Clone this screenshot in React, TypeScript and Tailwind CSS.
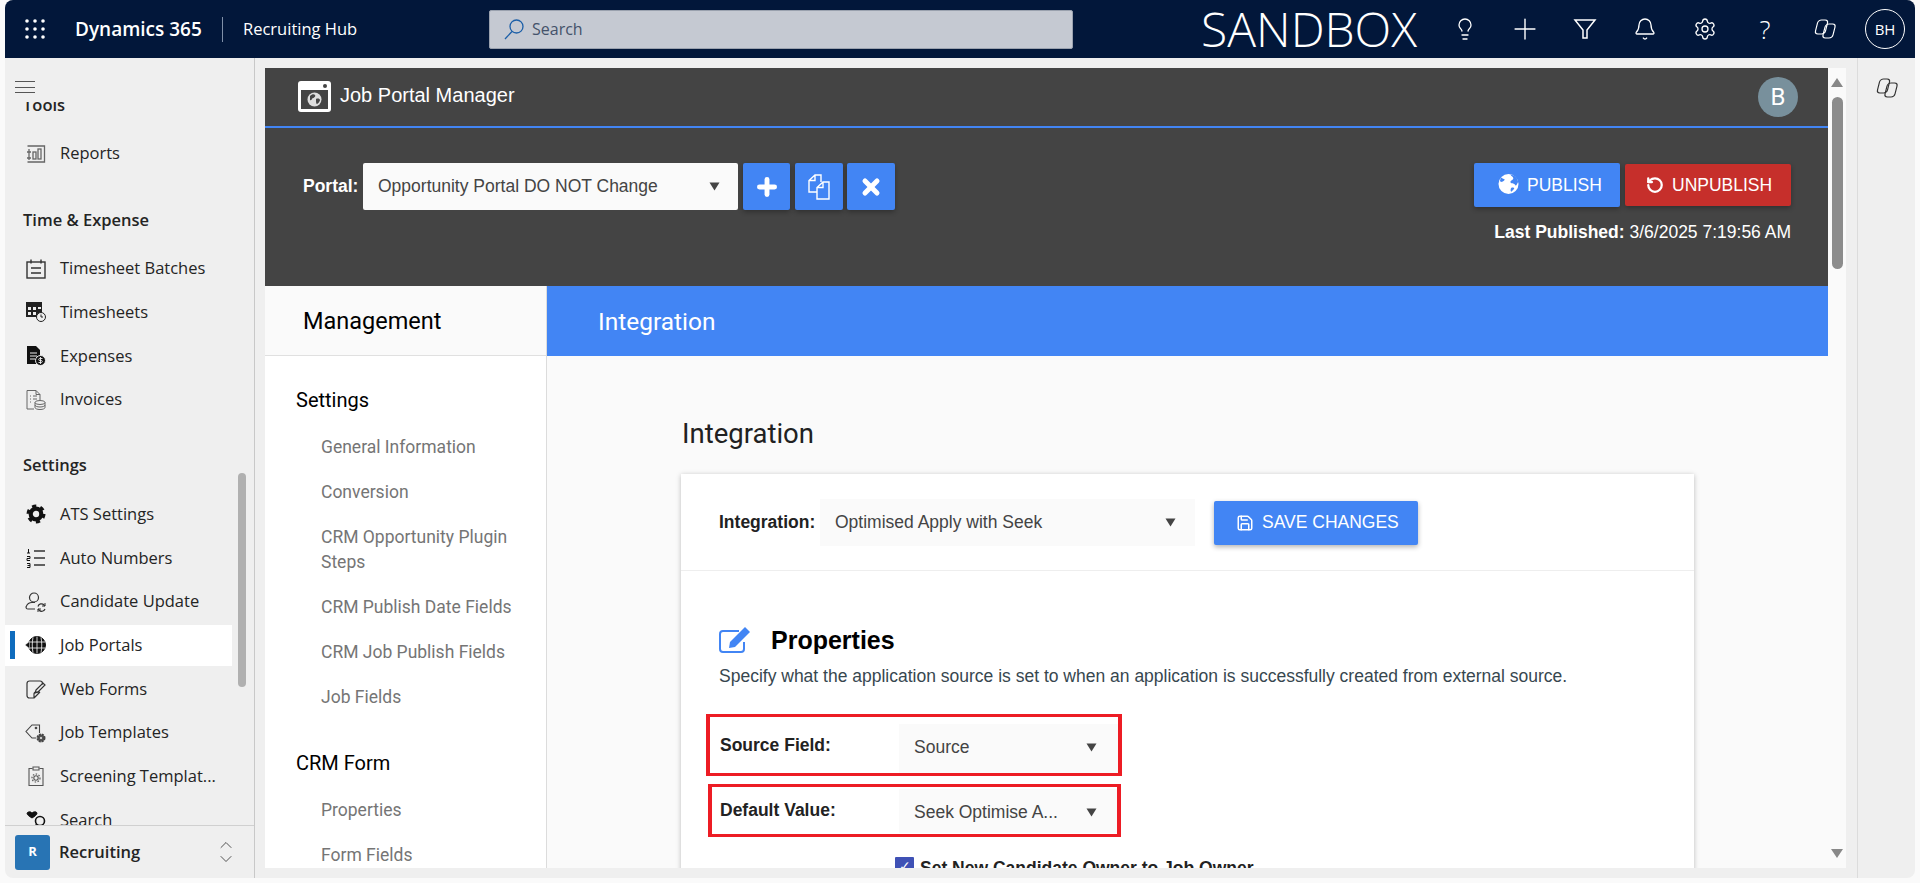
import React from 'react';
import { Lightbulb, Plus, Bell, Settings, ChevronUp, ChevronDown, RotateCcw, Save, X } from 'lucide-react';

const Caret = () => (
    <svg width="11" height="9" viewBox="0 0 11 9" className="shrink-0"><path d="M0.5 0.5h10L5.5 8.5z" fill="#444" /></svg>
);

const Copilot = ({ className = '' }: { className?: string }) => (
    <svg viewBox="0 0 24 24" fill="none" stroke="currentColor" strokeWidth="1.2" className={className}>
        <rect x="4.5" y="3" width="10" height="14" rx="3.2" transform="skewX(-14) translate(1.5 0)" />
        <rect x="13" y="7" width="10" height="14" rx="3.2" transform="skewX(-14) translate(1.5 0)" />
    </svg>
);

const Waffle = () => (
    <svg width="20" height="20" viewBox="0 0 20 20" fill="#fff">
        {[2, 10, 18].flatMap((y) => [2, 10, 18].map((x) => <circle key={`${x}-${y}`} cx={x} cy={y} r="1.8" />))}
    </svg>
);

const NavIcon = ({ name }: { name: string }) => {
    const s = { fill: 'none', stroke: '#333', strokeWidth: 1.1 };
    switch (name) {
        case 'reports':
            return <svg width="20" height="20" viewBox="0 0 20 20" {...s} stroke="#666" strokeWidth={1.3}><path d="M1.5 2h17v16h-17M3 5v11M1 8h4M1 14h4" /><rect x="7" y="8" width="3" height="7" /><rect x="12" y="5" width="3" height="10" /></svg>;
        case 'batches':
            return <svg width="20" height="20" viewBox="0 0 20 20" {...s} strokeWidth={1.4}><rect x="1" y="3" width="18" height="16" /><path d="M5 0.5v4M15 0.5v4M5 9h10M5 14h10" /></svg>;
        case 'timesheets':
            return <svg width="20" height="20" viewBox="0 0 20 20"><rect x="0" y="0" width="16" height="15" fill="#222" /><path d="M2 5h3v3H2zM7 5h3v3H7zM2 10h3v3H2zM7 10h3v3H7zM12 5h3v2h-3z" fill="#efefef" /><circle cx="15" cy="15" r="4.5" fill="#efefef" stroke="#222" /><path d="M15 12.5V15h2" stroke="#222" fill="none" /></svg>;
        case 'expenses':
            return <svg width="20" height="20" viewBox="0 0 20 20"><path d="M1 0h9l4 4v14H1z" fill="#111" /><path d="M4 7h7M4 10h7M4 13h5" stroke="#efefef" /><circle cx="14.5" cy="14.5" r="5" fill="#111" stroke="#efefef" /><path d="M16.5 12.5h-3c-1 0-1 2 0 2h2c1 0 1 2 0 2h-3M14.5 11v7" stroke="#efefef" strokeWidth=".9" fill="none" /></svg>;
        case 'invoices':
            return <svg width="20" height="20" viewBox="0 0 20 20" fill="none" stroke="#666" strokeWidth="1"><path d="M8 19H1V0.5h9l4 4V10M10 0.5v4h4M4 6h1M7 6h4M4 9h1M7 9h4M4 12h1" /><ellipse cx="14" cy="12.5" rx="5" ry="2" /><path d="M9 12.5v5c0 1 2 2 5 2s5-1 5-2v-5M9 15c0 1 2 2 5 2s5-1 5-2" /></svg>;
        case 'ats':
            return <svg width="20" height="20" viewBox="0 0 20 20" fill="none" stroke="#111"><circle cx="10" cy="10" r="5.3" strokeWidth="4.2" /><circle cx="10" cy="10" r="8" strokeWidth="3" strokeDasharray="4.2 4.18" /></svg>;
        case 'numbers':
            return <svg width="20" height="20" viewBox="0 0 20 20" fill="none" stroke="#333" strokeWidth="1.3"><path d="M8 3h11M8 10h11M8 17h11" /><path d="M2.5 1v4M1 5h3M1 8.5h3v2H1v2h3M1 15.5h3v4H1M1.5 17.5H4" strokeWidth="1" stroke="#111" /></svg>;
        case 'candidate':
            return <svg width="21" height="20" viewBox="0 0 21 20" fill="none" stroke="#333" strokeWidth="1.2"><circle cx="9" cy="5.5" r="4.5" /><path d="M10 17H3c-1.5 0-2.3-1.2-1.8-2.4C2.2 12 4.6 10.5 7 10.5h3" /><path d="M13 14.5a3.5 3.5 0 0 1 6-1.5l1 1M20 17a3.5 3.5 0 0 1-6 1l-1-1" /><path d="M20 11v3h-3M13 20v-3h3" strokeWidth="1" /></svg>;
        case 'portals':
            return <svg width="21" height="20" viewBox="0 0 21 20" fill="none" stroke="#111"><circle cx="12" cy="10" r="8.5" fill="#111" /><path d="M12 1.5v17M8 2.5c-1 5-1 10 0 15M16 2.5c1 5 1 10 0 15M3.5 7h17M3.5 13h17" stroke="#fff" strokeWidth=".8" /><path d="M0 10l4.5-3.5v7z" fill="#111" stroke="#fff" strokeWidth=".5" /></svg>;
        case 'forms':
            return <svg width="20" height="20" viewBox="0 0 20 20" fill="none" stroke="#333" strokeWidth="1.2"><path d="M8 19H3.5C2 19 1 18 1 16.5V4.5C1 3 2 2 3.5 2H14c1.5 0 2.5 1 2.5 2.5v1M8 19l6-6M8 19v-4c0-1 .8-2 2-2h4" /><path d="M10 11l7-7 2 2-7 7-3 1z" /></svg>;
        case 'templates':
            return <svg width="21" height="20" viewBox="0 0 21 20" fill="none" stroke="#444" strokeWidth="1.1"><path d="M11 15H7L1 8.5 7 2h7.5v8" /><circle cx="11" cy="5" r=".8" fill="#444" /><circle cx="16" cy="15" r="3.5" fill="#555" strokeDasharray="2 .8" strokeWidth="2" /><circle cx="16" cy="15" r="1" fill="#efefef" stroke="none" /></svg>;
        case 'screening':
            return <svg width="20" height="20" viewBox="0 0 20 20" fill="none" stroke="#555" strokeWidth="1.1"><path d="M6.5 2.5H3v17h14v-17h-3.5" /><path d="M7 1h6v3H7z" /><circle cx="10" cy="12" r="2.2" /><circle cx="10" cy="12" r="4" strokeDasharray="1.5 1.5" strokeWidth="1.2" /></svg>;
        default:
            return <svg width="20" height="20" viewBox="0 0 20 20" fill="none"><circle cx="14" cy="11" r="4.5" stroke="#111" strokeWidth="1.6" /><path d="M10.5 14l-4 4M1 3c2-2 4-1 5 0 1-1 4-2 5 0 0 2-2 3-5 5C3 6 1 5 1 3z" fill="#111" stroke="#111" /></svg>;
    }
};

const NavRow = ({ icon, label, active }: { icon: string; label: string; active?: boolean }) => (
    <div className="h-[43.7px] py-px pr-[22px] flex items-stretch">
        <div className={`flex-1 flex items-center ${active ? 'bg-white' : ''}`}>
            <div className={`w-[5px] h-[28px] ml-[5px] ${active ? 'bg-[#0f6cbd]' : ''}`}></div>
            <div className="w-[27px] ml-[7px] shrink-0 flex justify-center"><NavIcon name={icon} /></div>
            <span className="ml-[11px] text-[#242424] whitespace-nowrap">{label}</span>
        </div>
    </div>
);

const NavHeader = ({ label }: { label: string }) => (
    <div className="h-[71px] pl-[18px] pt-[31px] font-semibold text-[#242424] leading-[26px]">{label}</div>
);

const SideLink = ({ children }: { children: React.ReactNode }) => (
    <div className="pl-[25px] mt-[20px] text-[17.5px] text-[#757575] leading-[25px]">{children}</div>
);

const BlueIconBtn = ({ children, className = '' }: { children: React.ReactNode; className?: string }) => (
    <div className={`h-[47px] rounded-[2px] bg-[#4285f4] text-white flex items-center justify-center shadow-[0_2px_5px_rgba(0,0,0,0.3)] ${className}`}>{children}</div>
);

export default function App() {
    return (
        <div className="w-[1920px] h-[883px] overflow-hidden bg-[#fafafa] px-[5px] pb-[5px] font-['Liberation_Sans',sans-serif]">
            <div className="h-[878px] rounded-lg overflow-hidden bg-[#efefef] flex flex-col">
                {/* Top bar */}
                <header className="h-[58px] shrink-0 bg-[#02173a] text-white flex items-center font-['Open_Sans',sans-serif]">
                    <div className="ml-[20px]"><Waffle /></div>
                    <span className="ml-[30px] w-[128px] text-[19px] font-semibold whitespace-nowrap">Dynamics 365</span>
                    <div className="ml-[19px] w-px h-[25px] bg-[#8090a8]"></div>
                    <span className="ml-[20px] w-[115px] text-[16.5px] whitespace-nowrap">Recruiting Hub</span>
                    <div className="ml-[131px] w-[584px] h-[39px] bg-[#c5c9d2] border border-[#9aa1ae] rounded-[2px] flex items-center pl-[14px] text-[#44526a]">
                        <svg width="20" height="21" viewBox="0 0 20 21" fill="none" stroke="#1c5fa8" strokeWidth="1.3"><circle cx="12.5" cy="7.5" r="6.5" /><path d="M8 12.5L1 20" /></svg>
                        <span className="ml-[8px] text-[16px]">Search</span>
                    </div>
                    <span className="ml-[128px] text-[48px] font-light leading-none whitespace-nowrap">SANDBOX</span>
                    <div className="ml-auto flex items-center">
                        <div className="w-[60px] flex justify-center"><Lightbulb size={24} strokeWidth={1.3} /></div>
                        <div className="w-[60px] flex justify-center"><Plus size={34} strokeWidth={1} /></div>
                        <div className="w-[60px] flex justify-center">
                            <svg width="24" height="24" viewBox="0 0 24 24" fill="none" stroke="#fff" strokeWidth="1.5"><path d="M2 3h20l-8 10v8h-4v-8z" /></svg>
                        </div>
                        <div className="w-[60px] flex justify-center"><Bell size={24} strokeWidth={1.3} /></div>
                        <div className="w-[60px] flex justify-center"><Settings size={24} strokeWidth={1.3} /></div>
                        <div className="w-[60px] flex justify-center text-[26px] font-light leading-none">?</div>
                        <div className="w-[60px] flex justify-center"><Copilot className="w-[24px] h-[24px]" /></div>
                        <div className="w-[40px] h-[40px] ml-[10px] mr-[10px] rounded-full border border-white flex items-center justify-center text-[15px]">BH</div>
                    </div>
                </header>

                <div className="flex-1 flex min-h-0">
                    {/* Left nav */}
                    <aside className="w-[250px] shrink-0 border-r border-[#c8c8c8] flex flex-col font-['Open_Sans',sans-serif] text-[16.5px]">
                        <div className="h-[44px] shrink-0 pl-[10px] pt-[23px]">
                            <div className="w-[20px] h-[12px] border-y border-[#555] flex items-center"><div className="w-full h-px bg-[#555]"></div></div>
                        </div>
                        <div className="flex-1 min-h-0 overflow-hidden flex">
                            <div className="flex-1 -mt-[41px]">
                                <NavHeader label="Tools" />
                                <NavRow icon="reports" label="Reports" />
                                <NavHeader label="Time & Expense" />
                                <NavRow icon="batches" label="Timesheet Batches" />
                                <NavRow icon="timesheets" label="Timesheets" />
                                <NavRow icon="expenses" label="Expenses" />
                                <NavRow icon="invoices" label="Invoices" />
                                <NavHeader label="Settings" />
                                <NavRow icon="ats" label="ATS Settings" />
                                <NavRow icon="numbers" label="Auto Numbers" />
                                <NavRow icon="candidate" label="Candidate Update" />
                                <NavRow icon="portals" label="Job Portals" active />
                                <NavRow icon="forms" label="Web Forms" />
                                <NavRow icon="templates" label="Job Templates" />
                                <NavRow icon="screening" label="Screening Templat..." />
                                <NavRow icon="search" label="Search" />
                            </div>
                            {/* Nav scrollbar */}
                            <div className="w-[16px] shrink-0 -ml-[16px] pt-[371px]">
                                <div className="w-[8px] h-[214px] rounded-full bg-[#b0b0b0]"></div>
                            </div>
                        </div>
                        <div className="h-[53px] shrink-0 border-t border-[#d0d0d0] flex items-center pl-[10px] pr-[18px]">
                            <div className="w-[35px] h-[35px] rounded-[3px] bg-[#2874b4] text-white text-[13px] font-bold flex items-center justify-center">R</div>
                            <span className="ml-[9px] font-semibold text-[#242424]">Recruiting</span>
                            <div className="ml-auto flex flex-col text-[#333]">
                                <ChevronUp size={20} strokeWidth={1} className="-mb-[6px]" />
                                <ChevronDown size={20} strokeWidth={1} />
                            </div>
                        </div>
                    </aside>

                    {/* Main */}
                    <main className="flex-1 min-w-0 pl-[10px] pr-[11px] py-[10px] flex">
                        <div className="flex-1 min-w-0 flex flex-col overflow-hidden bg-[#fafafa]">
                            <div className="h-[218px] shrink-0 bg-[#444444] text-white">
                                <div className="h-[60px] border-b-2 border-[#4285f4] flex items-center pl-[33px] pr-[30px]">
                                    <svg width="33" height="31" viewBox="0 0 33 31" className="shrink-0 -mt-[2px]">
                                        <rect width="33" height="31" rx="3" fill="#fff" />
                                        <rect x="3" y="9" width="27" height="19" fill="#444" />
                                        <circle cx="27" cy="5" r="2" fill="#444" />
                                        <circle cx="16.5" cy="18.5" r="7" fill="#ddd" />
                                        <path d="M12 15c2-2 4-2 5-1s-1 3-2 3-1 3-3 2zM18 18c2-1 4 0 4 1s-2 4-3 4-1-3-1-5z" fill="#444" />
                                    </svg>
                                    <span className="ml-[9px] text-[20px] -mt-[4px]">Job Portal Manager</span>
                                    <div className="ml-auto w-[40px] h-[40px] rounded-full bg-[#78909c] flex items-center justify-center text-[24px] font-['Roboto',sans-serif]">B</div>
                                </div>
                                <div className="flex justify-between pl-[38px] pr-[37px] pt-[35px]">
                                    <div className="flex items-center h-[47px] text-[17.5px]">
                                        <span className="font-bold w-[60px] whitespace-nowrap">Portal:</span>
                                        <div className="w-[375px] h-[47px] bg-[#fafafa] rounded-[2px] flex items-center justify-between pl-[15px] pr-[18px] text-[#444]">
                                            Opportunity Portal DO NOT Change
                                            <Caret />
                                        </div>
                                        <BlueIconBtn className="w-[47px] ml-[5px]"><Plus size={26} strokeWidth={4.5} /></BlueIconBtn>
                                        <BlueIconBtn className="w-[48px] ml-[5px]">
                                            <svg width="24" height="26" viewBox="0 0 24 26" fill="none" stroke="#fff" strokeWidth="1.4">
                                                <path d="M14 8V1H8L2 6.5V18h8M8 1v5.5H2" />
                                                <path d="M16 8h6v17H10V13.5zM16 8v5.5h-6" />
                                            </svg>
                                        </BlueIconBtn>
                                        <BlueIconBtn className="w-[48px] ml-[4px]"><X size={24} strokeWidth={5} /></BlueIconBtn>
                                    </div>
                                    <div className="flex flex-col items-end text-[17.5px]">
                                        <div className="flex items-center h-[44px]">
                                            <div className="w-[146px] h-[44px] rounded-[2px] bg-[#4285f4] flex items-center pl-[24px] gap-[8px] shadow-[0_2px_5px_rgba(0,0,0,0.3)]">
                                                <svg width="21" height="22" viewBox="0 0 22 22" className="-mt-[3px]"><circle cx="11" cy="11" r="10.5" fill="#fff" /><path d="M13 1c1 2 3 2 3 4s-3 2-3 4 4 1 5 3 2-1 3-3c0-4-3-7-8-8zM14 15c2-1 3 0 3 1l-3 3c-1 0-1-3 0-4zM3 4c1 1 3 2 4 2 0 2-2 2-3 3L2 8z" fill="#4285f4" /></svg>
                                                PUBLISH
                                            </div>
                                            <div className="w-[166px] h-[42px] ml-[5px] rounded-[2px] bg-[#c62f2b] flex items-center pl-[21px] gap-[8px] shadow-[0_2px_5px_rgba(0,0,0,0.3)]">
                                                <RotateCcw size={18} strokeWidth={3} />
                                                UNPUBLISH
                                            </div>
                                        </div>
                                        <div className="mt-[15px] leading-[20px]"><b>Last Published:</b> 3/6/2025 7:19:56 AM</div>
                                    </div>
                                </div>
                            </div>

                            <div className="flex-1 min-h-0 flex">
                                {/* Management column */}
                                <div className="w-[282px] shrink-0 flex flex-col border-r border-[#dcdcdc] bg-white font-['Roboto',sans-serif]">
                                    <div className="h-[70px] shrink-0 pt-[2px] bg-[#fafafa] border-b border-[#e0e0e0] flex items-center pl-[38px] text-[23.5px] text-black">Management</div>
                                    <div className="pl-[31px] pr-[10px] pt-[29px] overflow-hidden">
                                        <div className="text-[20px] leading-[30px] text-black">Settings</div>
                                        <SideLink>General Information</SideLink>
                                        <SideLink>Conversion</SideLink>
                                        <SideLink>CRM Opportunity Plugin Steps</SideLink>
                                        <SideLink>CRM Publish Date Fields</SideLink>
                                        <SideLink>CRM Job Publish Fields</SideLink>
                                        <SideLink>Job Fields</SideLink>
                                        <div className="mt-[38px] text-[20px] leading-[30px] text-black">CRM Form</div>
                                        <SideLink>Properties</SideLink>
                                        <SideLink>Form Fields</SideLink>
                                    </div>
                                </div>

                                {/* Integration column */}
                                <div className="flex-1 min-w-0 flex flex-col">
                                    <div className="h-[70px] shrink-0 pt-[2px] bg-[#4285f4] flex items-center pl-[51px] text-white text-[24.5px] font-['Roboto',sans-serif]">Integration</div>
                                    <div className="px-[134px] flex-1 min-h-0 overflow-hidden">
                                        <h2 className="mt-[60px] pl-px text-[27.5px] leading-[36px] text-[#212121] font-['Roboto',sans-serif]">Integration</h2>
                                        <div className="mt-[22px] bg-white shadow-[0_1px_5px_rgba(0,0,0,0.25)] h-[500px] text-[17.5px]">
                                            <div className="h-[97px] border-b border-[#eee] flex items-center pl-[38px]">
                                                <span className="font-bold text-[#222] w-[101px] whitespace-nowrap">Integration:</span>
                                                <div className="w-[375px] h-[47px] bg-[#fafafa] flex items-center justify-between pl-[15px] pr-[19px] text-[#444]">
                                                    Optimised Apply with Seek
                                                    <Caret />
                                                </div>
                                                <div className="ml-[19px] mt-px w-[204px] h-[44px] rounded-[2px] bg-[#4285f4] text-white flex items-center pl-[22px] gap-[8px] shadow-[0_2px_5px_rgba(0,0,0,0.3)]">
                                                    <Save size={18} strokeWidth={2} />
                                                    SAVE CHANGES
                                                </div>
                                            </div>
                                            <div className="pt-[55px] pl-[38px] flex items-center">
                                                <svg width="33" height="28" viewBox="0 0 33 28" fill="none" stroke="#4285f4" strokeWidth="2"><path d="M25 16v7c0 2-1 3-3 3H4c-2 0-3-1-3-3V8c0-2 1-3 3-3h16" /><path d="M10 22l1-6L26 1l5 5-15 15z" fill="#4285f4" stroke="none" /></svg>
                                                <span className="ml-[19px] text-[25px] font-bold leading-[28px] text-black">Properties</span>
                                            </div>
                                            <p className="mt-[11px] pl-[38px] leading-[22px] text-[#37474f]">Specify what the application source is set to when an application is successfully created from external source.</p>
                                            <div className="mt-[27px] ml-[25px] w-[416px] h-[62px] border-x-4 border-y-[3px] border-[#ed1c24] flex items-center pl-[10px]">
                                                <span className="w-[179px] font-bold text-[#222] mt-[1px]">Source Field:</span>
                                                <div className="w-[219px] h-[49px] mt-[7px] pb-[2px] bg-[#fafafa] flex items-center justify-between pl-[15px] pr-[21px] text-[#444]">
                                                    Source
                                                    <Caret />
                                                </div>
                                            </div>
                                            <div className="mt-[8px] ml-[27px] w-[413px] h-[53px] border-x-4 border-y-[3px] border-[#ed1c24] flex items-center pl-[8px]">
                                                <span className="w-[179px] font-bold text-[#222]">Default Value:</span>
                                                <div className="w-[218px] h-[44px] mt-[1px] pt-[2px] bg-[#fafafa] flex items-center justify-between pl-[15px] pr-[20px] text-[#444]">
                                                    Seek Optimise A...
                                                    <Caret />
                                                </div>
                                            </div>
                                            <div className="mt-[20px] ml-[214px] flex items-start">
                                                <div className="w-[19px] h-[19px] bg-[#3f51b5] rounded-[1px] text-white flex items-center justify-center text-[14px]">✓</div>
                                                <span className="ml-[6px] font-bold leading-[22px] text-[#222]">Set New Candidate Owner to Job Owner</span>
                                            </div>
                                        </div>
                                    </div>
                                </div>
                            </div>
                        </div>

                        {/* Page scrollbar */}
                        <div className="w-[18px] shrink-0 bg-[#fafafa] flex flex-col items-center pt-[10px]">
                            <svg width="12" height="9" viewBox="0 0 12 9"><path d="M6 0l6 9H0z" fill="#888" /></svg>
                            <div className="w-[11px] h-[172px] mt-[10px] rounded-full bg-[#8c8c8c]"></div>
                            <svg width="12" height="9" viewBox="0 0 12 9" className="mt-auto mb-[10px]"><path d="M0 0h12L6 9z" fill="#888" /></svg>
                        </div>
                    </main>

                    {/* Right rail */}
                    <div className="w-[58px] shrink-0 border-l border-[#dcdcdc] flex justify-center pt-[18px] text-[#333]">
                        <Copilot className="w-[24px] h-[24px]" />
                    </div>
                </div>
            </div>
        </div>
    );
}
